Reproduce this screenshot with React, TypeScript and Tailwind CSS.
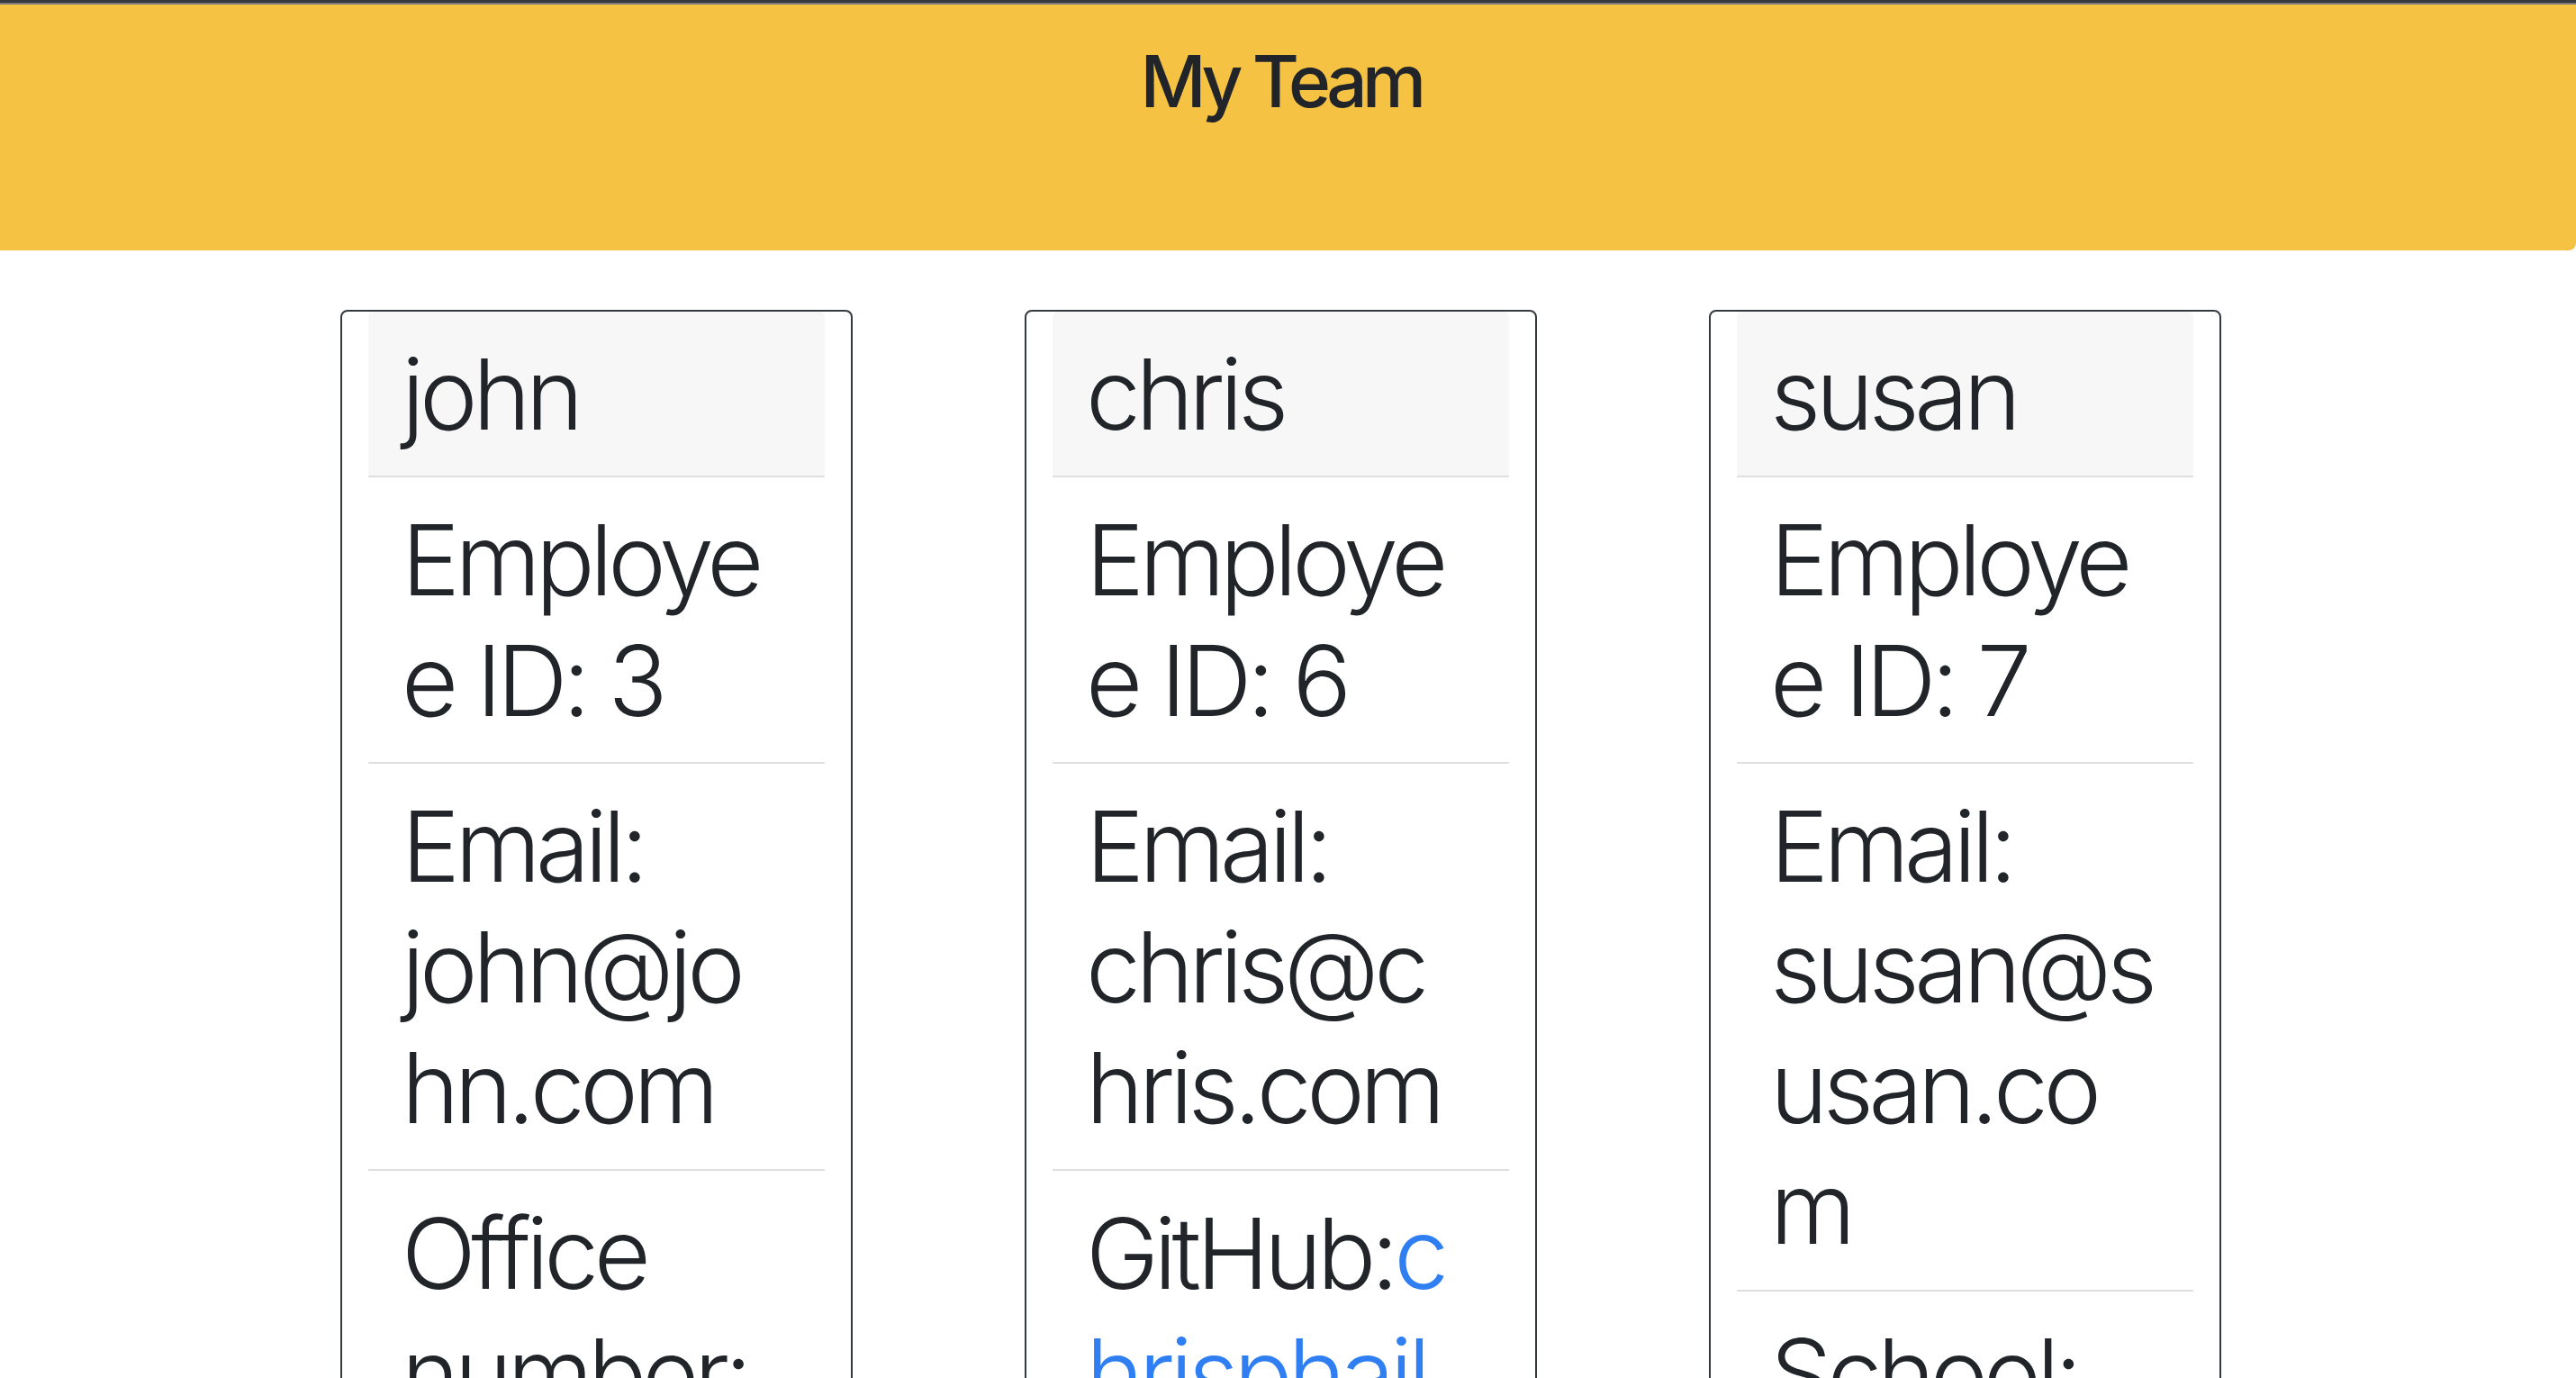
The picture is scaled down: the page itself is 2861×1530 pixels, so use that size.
type Line = { label: string; link?: string }

interface Member {
  name: string
  lines: Line[]
}

const team: Member[] = [
  {
    name: "john",
    lines: [
      { label: "Employee ID: 3" },
      { label: "Email: john@john.com" },
      { label: "Office number: 1234" },
    ],
  },
  {
    name: "chris",
    lines: [
      { label: "Employee ID: 6" },
      { label: "Email: chris@chris.com" },
      { label: "GitHub:", link: "chrisphail" },
    ],
  },
  {
    name: "susan",
    lines: [
      { label: "Employee ID: 7" },
      { label: "Email: susan@susan.com" },
      { label: "School: UCLA" },
    ],
  },
]

function MemberCard({ member }: { member: Member }) {
  return (
    <div className="w-[569px] shrink-0 rounded-[8px] border-2 border-[#343a40] px-[29px]">
      <div className="rounded-t-[6px] border-b-2 border-[#dfdfdf] bg-[#f7f7f7] pl-[37px] pr-[43px] py-[24px] text-[109px] font-light leading-[134px] tracking-[-0.05em] break-words">
        {member.name}
      </div>
      <ul>
        {member.lines.map((line, i) => (
          <li
            key={i}
            className="border-b-2 border-[#dfdfdf] pl-[37px] pr-[43px] py-[24px] text-[109px] font-light leading-[134px] tracking-[-0.05em] break-words"
          >
            {line.label}
            {line.link && (
              <a href="#" className="text-[#2f7ff2]">
                {line.link}
              </a>
            )}
          </li>
        ))}
      </ul>
    </div>
  )
}

export default function App() {
  return (
    <div className="min-h-screen bg-white text-[#212529] font-['Inter',sans-serif]">
      <div className="h-[3px] bg-[#393a3f]" />
      <div className="h-[2px] bg-[#77787c]" />
      <header className="h-[273px] rounded-br-[8px] bg-[#f6c244] pt-[37px] pr-[16px]">
        <h1 className="text-center text-[80px] font-medium leading-[1.2] tracking-[-0.07em]">My Team</h1>
      </header>
      <main className="flex gap-[191px] pl-[378px] pt-[66px]">
        {team.map((m) => (
          <MemberCard key={m.name} member={m} />
        ))}
      </main>
    </div>
  )
}
